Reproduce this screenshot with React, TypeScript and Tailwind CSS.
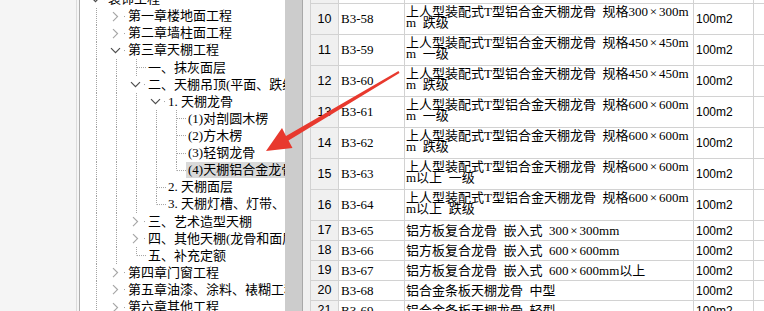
import React from 'react';

type Kind = 'open' | 'closed' | 'leaf';
type TNode = { level: number; text: string; kind: Kind; last?: boolean; selected?: boolean };

const nodes: TNode[] = [
  { level: 0, text: '装饰工程', kind: 'open' },
  { level: 1, text: '第一章楼地面工程', kind: 'closed' },
  { level: 1, text: '第二章墙柱面工程', kind: 'closed' },
  { level: 1, text: '第三章天棚工程', kind: 'open' },
  { level: 2, text: '一、抹灰面层', kind: 'leaf' },
  { level: 2, text: '二、天棚吊顶(平面、跌级)', kind: 'open' },
  { level: 3, text: '1.天棚龙骨', kind: 'open' },
  { level: 4, text: '(1)对剖圆木楞', kind: 'leaf' },
  { level: 4, text: '(2)方木楞', kind: 'leaf' },
  { level: 4, text: '(3)轻钢龙骨', kind: 'leaf' },
  { level: 4, text: '(4)天棚铝合金龙骨', kind: 'leaf', last: true, selected: true },
  { level: 3, text: '2.天棚面层', kind: 'leaf' },
  { level: 3, text: '3.天棚灯槽、灯带、灯孔', kind: 'leaf', last: true },
  { level: 2, text: '三、艺术造型天棚', kind: 'closed' },
  { level: 2, text: '四、其他天棚(龙骨和面层)', kind: 'closed' },
  { level: 2, text: '五、补充定额', kind: 'leaf', last: true },
  { level: 1, text: '第四章门窗工程', kind: 'closed' },
  { level: 1, text: '第五章油漆、涂料、裱糊工程', kind: 'closed' },
  { level: 1, text: '第六章其他工程', kind: 'closed' },
];

const DOT = '#a3a3a3';

function Col({ mode, kind, last }: { mode: 'ancestor' | 'own'; kind?: Kind; last?: boolean }) {
  return (
    <svg width="20" height="100%" className="block shrink-0 overflow-visible">
      {mode === 'ancestor' && (
        <line x1="10.5" y1="0" x2="10.5" y2="100%" stroke={DOT} strokeDasharray="1 1" />
      )}
      {mode === 'own' && kind === 'leaf' && (
        <>
          <line x1="10.5" y1="0" x2="10.5" y2={last ? '50%' : '100%'} stroke={DOT} strokeDasharray="1 1" />
          <line x1="11" y1="50%" x2="20" y2="50%" stroke={DOT} strokeDasharray="1 1" />
        </>
      )}
      {mode === 'own' && kind !== 'leaf' && (
        <>
          <line x1="18" y1="50%" x2="20" y2="50%" stroke={DOT} strokeDasharray="1 1" />
          <svg x="0" y="50%" overflow="visible">
            {kind === 'closed' ? (
              <path d="M7 -4.5 L11.5 0 L7 4.5" fill="none" stroke="#a6a6a6" strokeWidth="1.2" />
            ) : (
              <path d="M5 -2.5 L9.5 2 L14 -2.5" fill="none" stroke="#4d4d4d" strokeWidth="1.2" />
            )}
          </svg>
        </>
      )}
    </svg>
  );
}

function Label({ text }: { text: string }) {
  const m = text.match(/^(\d\.)(.*)$/);
  if (!m) return <>{text}</>;
  return (
    <>
      <span className="inline-block w-[13px]">{m[1]}</span>
      {m[2]}
    </>
  );
}

function Tree() {
  const lastAt: boolean[] = [];
  return (
    <div className="flex -mt-[9.4px] flex-col pl-[6px] font-['Liberation_Serif','Noto_Sans_CJK_SC',serif] text-[13px] text-black">
      {nodes.map((n, i) => {
        lastAt[n.level] = !!n.last;
        const cols = [];
        for (let k = 0; k < n.level; k++) {
          cols.push(lastAt[k] ? <div key={k} className="w-[20px] shrink-0" /> : <Col key={k} mode="ancestor" />);
        }
        cols.push(<Col key="own" mode="own" kind={n.kind} last={n.last} />);
        return (
          <div key={i} className="flex h-[17.12px] shrink-0 items-center whitespace-nowrap">
            {cols}
            <span
              className={
                n.selected
                  ? 'inline-block h-[16px] bg-[#d9d9d9] pl-[2px] pr-[2px] leading-[16px]'
                  : 'inline-block h-[16px] pl-[2px] pr-[2px] leading-[16px]'
              }
            >
              <Label text={n.text} />
            </span>
          </div>
        );
      })}
    </div>
  );
}

type Row = { n: number; code: string; l1: string; l2?: string };

const rows: Row[] = [
  { n: 9, code: 'B3-57', l1: '上人型装配式T型铝合金天棚龙骨 规格300×300m', l2: 'm 一级' },
  { n: 10, code: 'B3-58', l1: '上人型装配式T型铝合金天棚龙骨 规格300×300m', l2: 'm 跌级' },
  { n: 11, code: 'B3-59', l1: '上人型装配式T型铝合金天棚龙骨 规格450×450m', l2: 'm 一级' },
  { n: 12, code: 'B3-60', l1: '上人型装配式T型铝合金天棚龙骨 规格450×450m', l2: 'm 跌级' },
  { n: 13, code: 'B3-61', l1: '上人型装配式T型铝合金天棚龙骨 规格600×600m', l2: 'm 一级' },
  { n: 14, code: 'B3-62', l1: '上人型装配式T型铝合金天棚龙骨 规格600×600m', l2: 'm 跌级' },
  { n: 15, code: 'B3-63', l1: '上人型装配式T型铝合金天棚龙骨 规格600×600m', l2: 'm以上 一级' },
  { n: 16, code: 'B3-64', l1: '上人型装配式T型铝合金天棚龙骨 规格600×600m', l2: 'm以上 跌级' },
  { n: 17, code: 'B3-65', l1: '铝方板复合龙骨 嵌入式 300×300mm' },
  { n: 18, code: 'B3-66', l1: '铝方板复合龙骨 嵌入式 600×600mm' },
  { n: 19, code: 'B3-67', l1: '铝方板复合龙骨 嵌入式 600×600mm以上' },
  { n: 20, code: 'B3-68', l1: '铝合金条板天棚龙骨 中型' },
  { n: 21, code: 'B3-69', l1: '铝合金条板天棚龙骨 轻型' },
];

function Txt({ s }: { s: string }) {
  const parts = s.split(/( |×)/);
  return (
    <>
      {parts.map((p, i) =>
        p === ' ' ? (
          <span key={i} className="inline-block w-[6.5px]" />
        ) : p === '×' ? (
          <span key={i} className="inline-block w-[11px] text-center">
            ×
          </span>
        ) : (
          <span key={i}>{p}</span>
        )
      )}
    </>
  );
}

function TableRow({ r, first }: { r: Row; first?: boolean }) {
  const two = !!r.l2;
  return (
    <div
      className={
        (two ? 'h-[31px] ' : 'h-[20px] ') +
        (first ? '-mt-[27px] ' : '') +
        'flex shrink-0 border-b border-[#d2d2d2]'
      }
    >
      <div className="flex w-[29px] shrink-0 items-center justify-center border-x border-[#d2d2d2] bg-[#f0f0f0] font-['Liberation_Sans',sans-serif] text-[12.5px]">
        {r.n}
      </div>
      <div className="flex w-[66px] shrink-0 items-center border-r border-[#d2d2d2] pl-[2px]">
        {r.code}
      </div>
      <div
        className={
          (two ? 'justify-start pt-[2px] leading-[11px] ' : 'justify-center leading-[14px] ') +
          'flex w-[289px] shrink-0 flex-col overflow-hidden whitespace-nowrap border-r border-[#d2d2d2] pl-[1px]'
        }
      >
        <div>
          <Txt s={r.l1} />
        </div>
        {two && (
          <div>
            <Txt s={r.l2 as string} />
          </div>
        )}
      </div>
      <div className="flex w-[60px] shrink-0 items-center border-r border-[#d2d2d2] pl-[2px] font-['Liberation_Sans',sans-serif] text-[12px]">
        100m2
      </div>
      <div className="flex-1 bg-white" />
    </div>
  );
}

export default function App() {
  return (
    <div className="relative flex h-[311px] w-[764px] overflow-hidden bg-white text-black">
      <div className="w-[76px] shrink-0 bg-[#f5f5f5]" />
      <div className="w-px shrink-0 bg-[#dcdcdc]" />
      <div className="w-[2px] shrink-0 bg-[#f5f5f5]" />
      <div className="w-px shrink-0 bg-[#adadad]" />
      <div className="w-[205px] shrink-0 overflow-hidden bg-white">
        <Tree />
      </div>
      <div className="w-[17px] shrink-0 bg-[#cccccc]" />
      <div className="w-px shrink-0 bg-[#a8a8a8]" />
      <div className="w-[7px] shrink-0 bg-[#f0f0f0]" />
      <div className="flex min-w-0 flex-1 flex-col overflow-hidden font-['Liberation_Serif','Noto_Sans_CJK_SC',serif] text-[13px]">
        {rows.map((r, i) => (
          <TableRow key={r.n} r={r} first={i === 0} />
        ))}
      </div>
      <svg className="pointer-events-none absolute left-0 top-0" width="764" height="311">
        <polygon
          points="398.5,71.1 399.5,72.9 288.5,140.5 292.5,148 266,151 282,128 286,136"
          fill="#e8392e"
        />
      </svg>
    </div>
  );
}
